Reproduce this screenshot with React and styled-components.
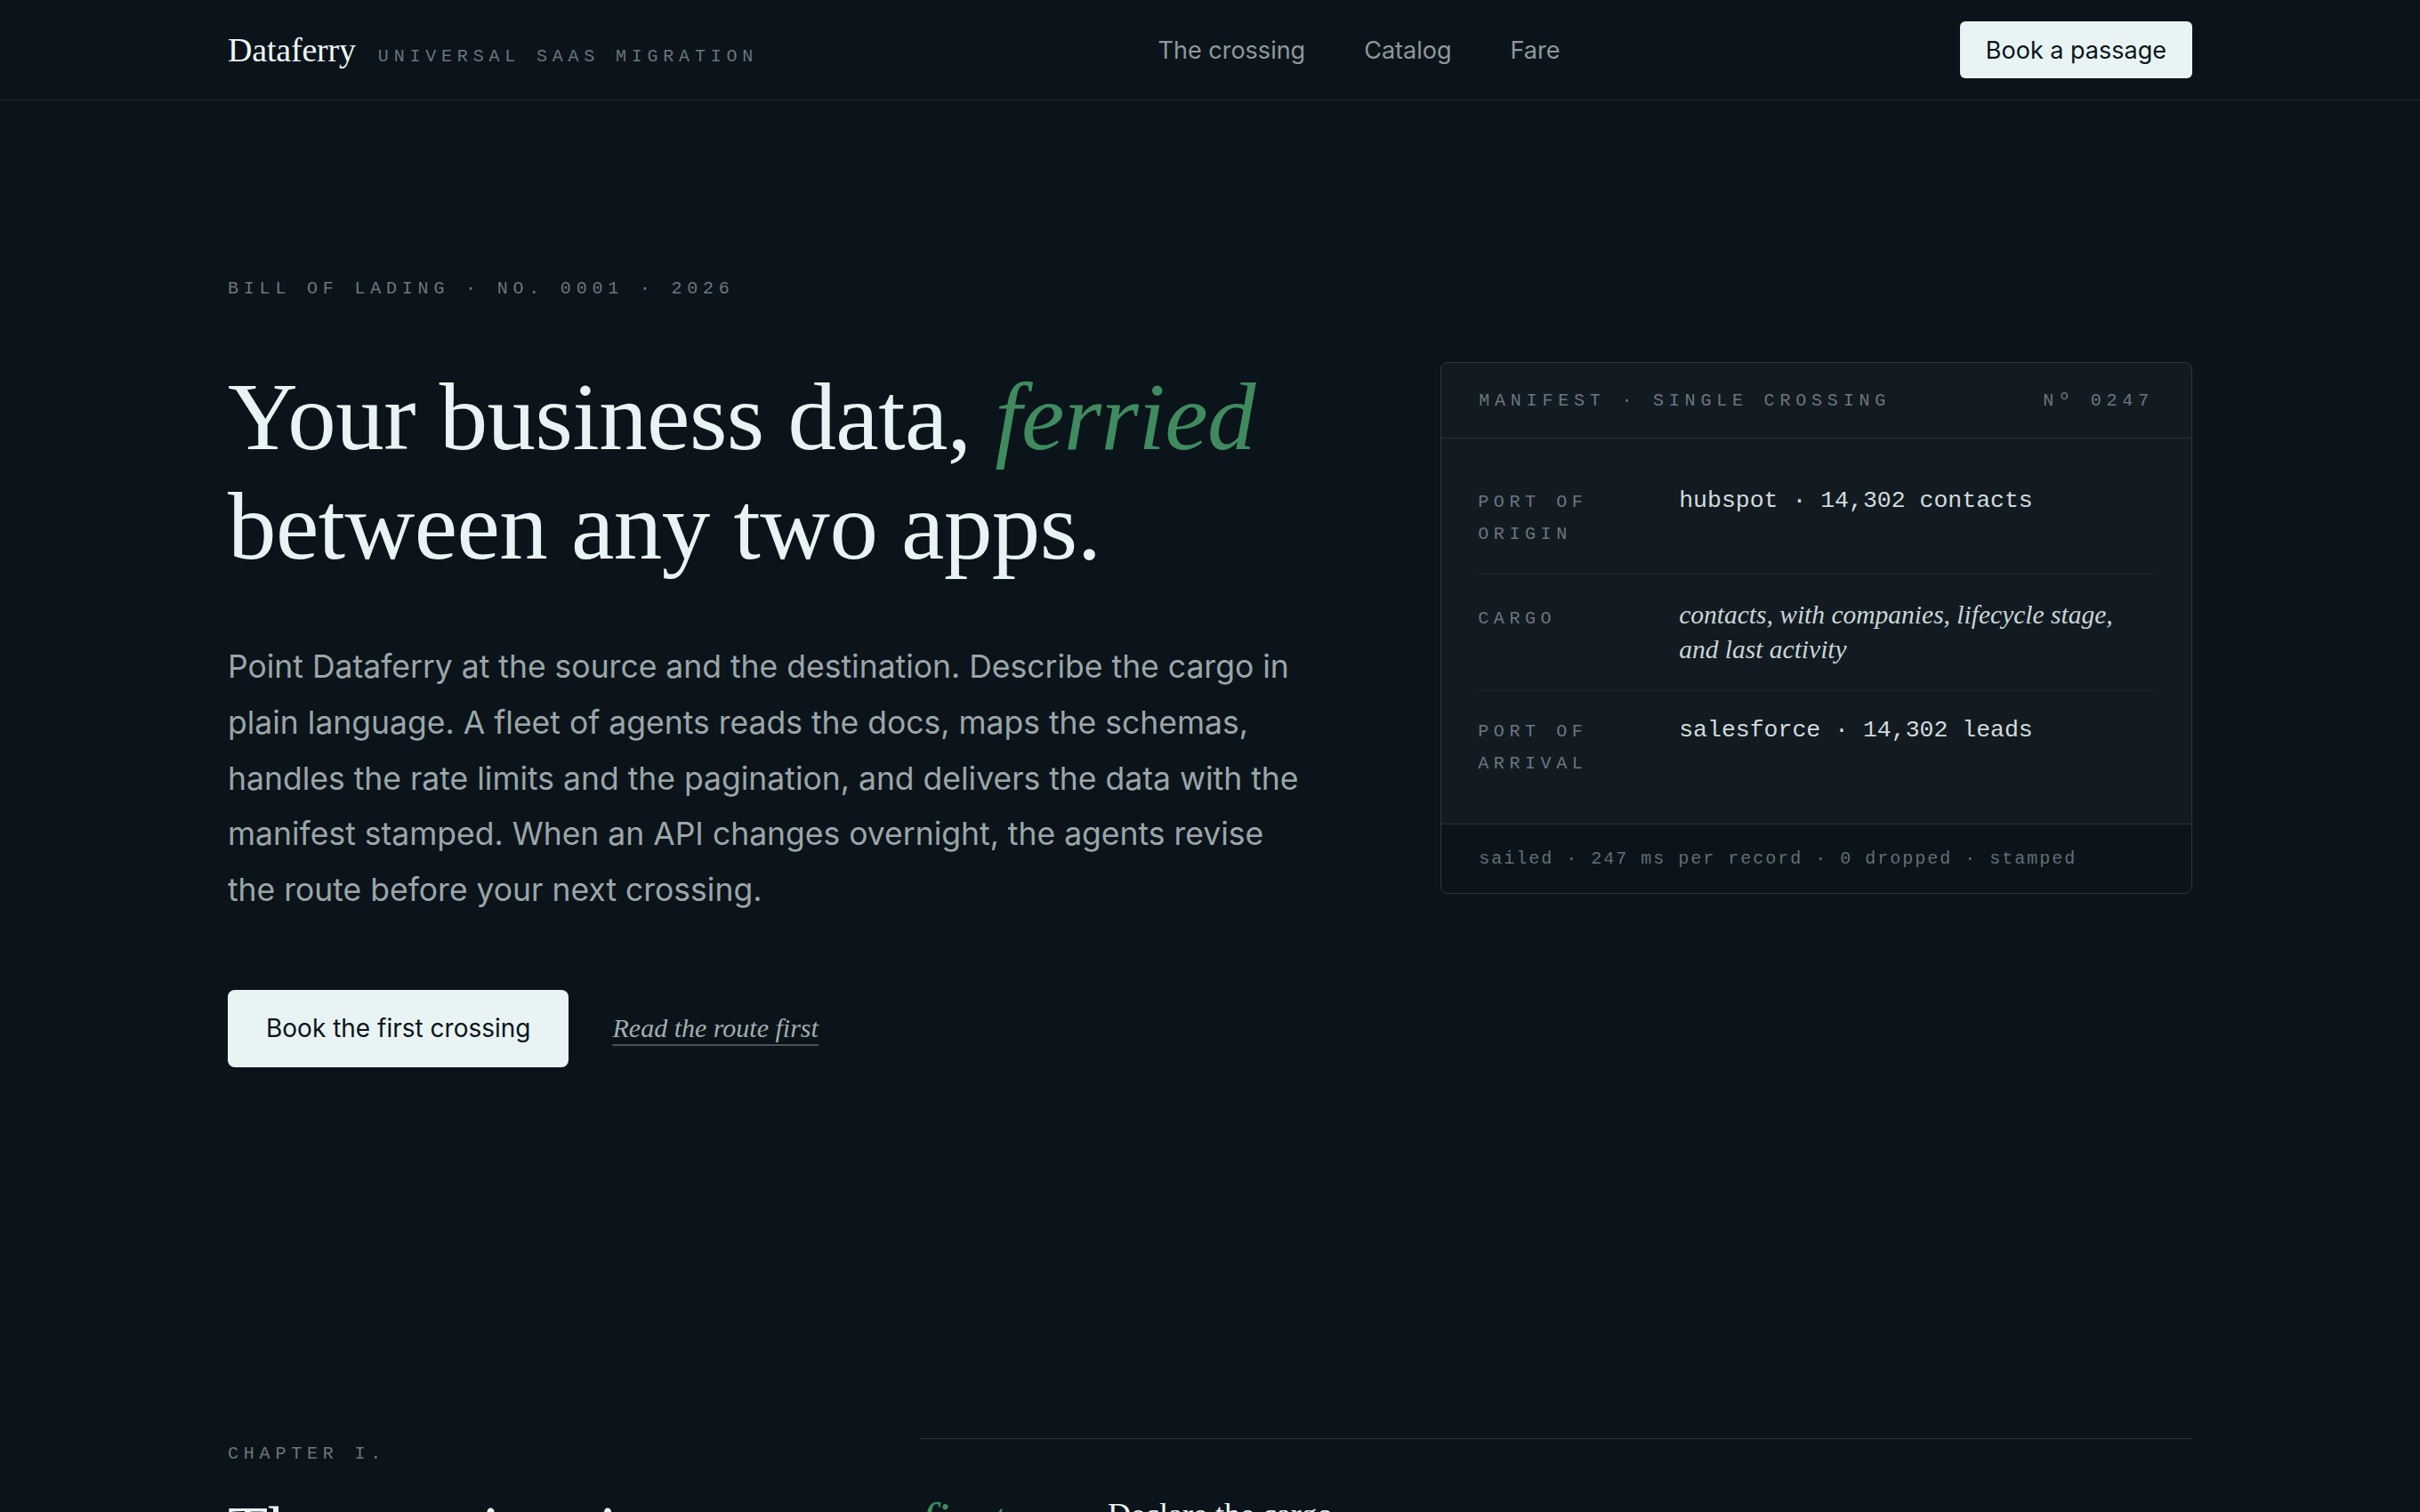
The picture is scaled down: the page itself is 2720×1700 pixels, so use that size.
import React from 'react';
import styled, { createGlobalStyle } from 'styled-components';

const GlobalStyle = createGlobalStyle`
  html, body {
    margin: 0;
    padding: 0;
    background: #0b141a;
  }
  body {
    font-family: Inter, "Liberation Sans", sans-serif;
    color: #e8f4f4;
  }
  * {
    box-sizing: border-box;
  }
`;

const serif = `"Liberation Serif", "DejaVu Serif", serif`;
const mono = `"Liberation Mono", "DejaVu Sans Mono", monospace`;

const Page = styled.div`
  min-height: 100vh;
  background: #0b141a;
  overflow: hidden;
`;

const Header = styled.header`
  border-bottom: 1px solid #1f2b2c;
`;

const HeaderInner = styled.div`
  max-width: 2208px;
  height: 112px;
  margin: 0 auto;
  display: flex;
  align-items: center;
  justify-content: space-between;
`;

const Brand = styled.div`
  display: flex;
  align-items: baseline;
  gap: 25px;
`;

const Logo = styled.span`
  font-family: ${serif};
  font-size: 38px;
  color: #eef7f7;
  letter-spacing: -0.005em;
`;

const Tagline = styled.span`
  font-family: ${mono};
  font-size: 20px;
  letter-spacing: 0.29em;
  color: #68757a;
`;

const Nav = styled.nav`
  display: flex;
  gap: 66px;
`;

const NavLink = styled.a`
  font-size: 27px;
  color: #8e999c;
  text-decoration: none;
`;

const SolidButton = styled.button`
  border: none;
  border-radius: ${(p) => (p.$large ? '8px' : '6px')};
  background: #e8f4f4;
  color: #0b141a;
  font-family: Inter, "Liberation Sans", sans-serif;
  font-size: ${(p) => (p.$large ? '28px' : '27px')};
  height: ${(p) => (p.$large ? '87px' : '64px')};
  padding: ${(p) => (p.$large ? '0 43px' : '0 29px')};
  cursor: pointer;
`;

const Hero = styled.section`
  max-width: 2208px;
  margin: 0 auto;
  padding: 197px 0 208px;
`;

const Eyebrow = styled.div`
  font-family: ${mono};
  font-size: 20px;
  line-height: 30px;
  letter-spacing: 0.29em;
  color: #6b777b;
  margin-bottom: ${(p) => p.$gap || 0}px;
`;

const HeroGrid = styled.div`
  display: grid;
  grid-template-columns: minmax(0, 1.5fr) minmax(0, 1fr);
  column-gap: 96px;
  align-items: start;
`;

const Headline = styled.h1`
  margin: 0;
  font-family: ${serif};
  font-weight: 400;
  font-size: 109px;
  line-height: 123px;
  color: #e8f4f4;
  letter-spacing: -0.005em;

  em {
    color: #3f8b5f;
  }
`;

const Lede = styled.p`
  margin: 66px 0 0;
  max-width: 1215px;
  font-size: 35.5px;
  line-height: 62.75px;
  color: #9ba6a9;
`;

const Actions = styled.div`
  margin-top: 80px;
  display: flex;
  align-items: center;
  gap: 49px;
`;

const RouteLink = styled.a`
  font-family: ${serif};
  font-style: italic;
  font-size: 30px;
  color: #a3adb0;
  text-decoration: underline;
  text-decoration-color: #485457;
  text-decoration-thickness: 2px;
  text-underline-offset: 8px;
`;

const Manifest = styled.aside`
  background: #121b22;
  border: 1px solid #2d393b;
  border-radius: 8px;
  overflow: hidden;
`;

const ManifestHead = styled.div`
  height: 85px;
  padding: 0 42px;
  display: flex;
  align-items: center;
  justify-content: space-between;
  border-bottom: 1px solid #283436;
  font-family: ${mono};
  font-size: 20px;
  letter-spacing: 0.29em;
  color: #6a777b;
`;

const ManifestBody = styled.div`
  padding: 26px 41px 23px;
`;

const Row = styled.div`
  display: grid;
  grid-template-columns: 200px minmax(0, 1fr);
  column-gap: 26px;
  align-items: baseline;
  padding: 26px 0;
  border-bottom: 1px solid #1d292a;

  &:last-child {
    border-bottom: none;
  }
`;

const Label = styled.div`
  font-family: ${mono};
  font-size: 20px;
  line-height: 36px;
  letter-spacing: 0.28em;
  color: #6b777b;
`;

const Value = styled.div`
  font-family: ${(p) => (p.$cargo ? serif : mono)};
  font-style: ${(p) => (p.$cargo ? 'italic' : 'normal')};
  font-size: ${(p) => (p.$cargo ? '29.5px' : '26.5px')};
  line-height: ${(p) => (p.$cargo ? '39px' : '36px')};
  color: ${(p) => (p.$cargo ? '#cbd5d6' : '#d2dbdc')};
`;

const ManifestFoot = styled.div`
  height: 78px;
  padding: 0 42px;
  display: flex;
  align-items: center;
  background: #0b141a;
  border-top: 1px solid #283436;
  font-family: ${mono};
  font-size: 20px;
  letter-spacing: 2px;
  color: #636f73;
`;

const Chapter = styled.section`
  max-width: 2208px;
  margin: 0 auto;
  padding: 209px 0 120px;
  display: grid;
  grid-template-columns: 682px minmax(0, 1fr);
  column-gap: 96px;
`;

const ChapterIntro = styled.div`
  padding-top: 3px;
`;

const ChapterTitle = styled.h2`
  margin: 0;
  max-width: 560px;
  font-family: ${serif};
  font-weight: 400;
  font-size: 74px;
  line-height: 1.1;
  color: #e8f4f4;
`;

const Steps = styled.ol`
  list-style: none;
  margin: 0;
  padding: 62px 0 0;
  border-top: 1px solid #263234;
`;

const Step = styled.li`
  display: grid;
  grid-template-columns: 211px minmax(0, 1fr);
  align-items: start;
  padding-bottom: 56px;
`;

const Ordinal = styled.span`
  font-family: ${serif};
  font-style: italic;
  font-size: 60px;
  line-height: 1;
  color: #3f8b5f;
`;

const StepTitle = styled.h3`
  margin: 0;
  font-family: ${serif};
  font-weight: 400;
  font-size: 36px;
  line-height: 1.3;
  color: #e8f4f4;
`;

const StepText = styled.p`
  margin: 14px 0 0;
  font-size: 28px;
  line-height: 1.7;
  color: #9ba6a9;
`;

const rows = [
  { label: 'PORT OF ORIGIN', value: 'hubspot · 14,302 contacts' },
  { label: 'CARGO', value: 'contacts, with companies, lifecycle stage, and last activity', cargo: true },
  { label: 'PORT OF ARRIVAL', value: 'salesforce · 14,302 leads' },
];

const steps = [
  { ord: 'first', title: 'Declare the cargo', text: 'Name the source, the destination, and what should travel between them.' },
  { ord: 'second', title: 'Read the charts', text: 'Agents read the API docs of both apps and map one schema onto the other.' },
];

export default function App() {
  return (
    <Page>
      <GlobalStyle />
      <Header>
        <HeaderInner>
          <Brand>
            <Logo>Dataferry</Logo>
            <Tagline>UNIVERSAL SAAS MIGRATION</Tagline>
          </Brand>
          <Nav>
            <NavLink href="#crossing">The crossing</NavLink>
            <NavLink href="#catalog">Catalog</NavLink>
            <NavLink href="#fare">Fare</NavLink>
          </Nav>
          <SolidButton>Book a passage</SolidButton>
        </HeaderInner>
      </Header>

      <Hero>
        <Eyebrow $gap={67}>BILL OF LADING · NO. 0001 · 2026</Eyebrow>
        <HeroGrid>
          <div>
            <Headline>
              Your business data, <em>ferried</em>
              <br />
              between any two apps.
            </Headline>
            <Lede>
              Point Dataferry at the source and the destination. Describe the cargo in plain
              language. A fleet of agents reads the docs, maps the schemas, handles the rate
              limits and the pagination, and delivers the data with the manifest stamped. When
              an API changes overnight, the agents revise the route before your next crossing.
            </Lede>
            <Actions>
              <SolidButton $large>Book the first crossing</SolidButton>
              <RouteLink href="#crossing">Read the route first</RouteLink>
            </Actions>
          </div>

          <Manifest>
            <ManifestHead>
              <span>MANIFEST · SINGLE CROSSING</span>
              <span>Nº 0247</span>
            </ManifestHead>
            <ManifestBody>
              {rows.map((r) => (
                <Row key={r.label}>
                  <Label>{r.label}</Label>
                  <Value $cargo={r.cargo}>{r.value}</Value>
                </Row>
              ))}
            </ManifestBody>
            <ManifestFoot>sailed · 247 ms per record · 0 dropped · stamped</ManifestFoot>
          </Manifest>
        </HeroGrid>
      </Hero>

      <Chapter id="crossing">
        <ChapterIntro>
          <Eyebrow $gap={30}>CHAPTER I.</Eyebrow>
          <ChapterTitle>The crossing, in four legs.</ChapterTitle>
        </ChapterIntro>
        <Steps>
          {steps.map((s) => (
            <Step key={s.ord}>
              <Ordinal>{s.ord}</Ordinal>
              <div>
                <StepTitle>{s.title}</StepTitle>
                <StepText>{s.text}</StepText>
              </div>
            </Step>
          ))}
        </Steps>
      </Chapter>
    </Page>
  );
}
